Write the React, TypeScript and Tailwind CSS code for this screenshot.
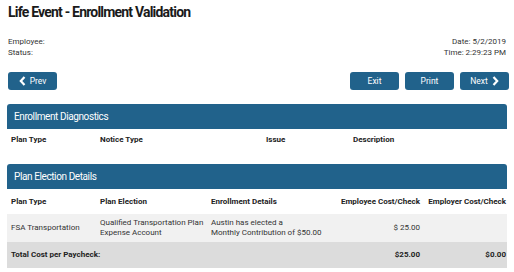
import React from "react";

function Chevron({ dir }: { dir: "left" | "right" }) {
  return (
    <svg width="7" height="10" viewBox="0 0 7 10" className="shrink-0">
      <path
        d={dir === "left" ? "M5.5 1 L1.8 5 L5.5 9" : "M1.5 1 L5.2 5 L1.5 9"}
        fill="none"
        stroke="white"
        strokeWidth="2.2"
      />
    </svg>
  );
}

function Btn({ children }: { children: React.ReactNode }) {
  return (
    <button className="flex h-[18px] w-[49px] items-center justify-center gap-[4px] rounded-[3px] bg-[#21628b] text-[8.5px] text-white">
      {children}
    </button>
  );
}

function SectionHeader({ title }: { title: string }) {
  return (
    <div className="flex h-[25px] items-center rounded-t-[3px] bg-[#21628b] px-[7px] text-[10px] tracking-[-0.4px] text-white">
      {title}
    </div>
  );
}

const cols = "grid grid-cols-[89px_111px_118px_91px_1fr] items-center pl-[4px] pr-[1px]";

export default function App() {
  return (
    <div
      className="h-[272px] w-[514px] overflow-hidden bg-white px-[7px] text-[#222]"
      style={{ fontFamily: "Roboto, 'Liberation Sans', sans-serif" }}
    >
      <h1 className="pl-[1px] pt-[2px] text-[14px] font-bold leading-[20px] tracking-[-0.8px] text-[#1a1a1a]">
        Life Event - Enrollment Validation
      </h1>

      {/* info */}
      <div className="mt-[14px] flex justify-between text-[8px] leading-[11px] text-[#333]">
        <div className="pl-[1px]">
          <div>Employee:</div>
          <div>Status:</div>
        </div>
        <div className="pr-[1px] text-right">
          <div>Date: 5/2/2019</div>
          <div>Time: 2:29:23 PM</div>
        </div>
      </div>

      {/* nav */}
      <div className="mt-[14px] flex items-center justify-between">
        <div className="pl-[1px]">
          <Btn>
            <Chevron dir="left" />
            <span>Prev</span>
          </Btn>
        </div>
        <div className="-mr-[2px] flex gap-[6px]">
          <Btn>Exit</Btn>
          <Btn>Print</Btn>
          <Btn>
            <span>Next</span>
            <Chevron dir="right" />
          </Btn>
        </div>
      </div>

      {/* diagnostics */}
      <div className="mt-[14px]">
        <SectionHeader title="Enrollment Diagnostics" />
        <div className="grid h-[22px] grid-cols-[89px_166px_87px_1fr] items-center px-[4px] text-[8px] font-bold">
          <div>Plan Type</div>
          <div>Notice Type</div>
          <div>Issue</div>
          <div>Description</div>
        </div>
      </div>

      {/* elections */}
      <div className="mt-[13px]">
        <SectionHeader title="Plan Election Details" />
        <div className="whitespace-nowrap text-[8px]">
          <div className={`${cols} h-[25px] font-bold`}>
            <div>Plan Type</div>
            <div>Plan Election</div>
            <div>Enrollment Details</div>
            <div className="text-right">Employee Cost/Check</div>
            <div className="text-right">Employer Cost/Check</div>
          </div>
          <div className={`${cols} h-[28px] bg-[#f1f1f1] leading-[10px] text-[#333]`}>
            <div>FSA Transportation</div>
            <div>
              Qualified Transportation Plan
              <br />
              Expense Account
            </div>
            <div>
              Austin has elected a
              <br />
              Monthly Contribution of $50.00
            </div>
            <div className="text-right">$ 25.00</div>
            <div />
          </div>
          <div className={`${cols} h-[26px] bg-[#dcdcdc] font-bold`}>
            <div className="col-span-3">Total Cost per Paycheck:</div>
            <div className="text-right">$25.00</div>
            <div className="text-right">$0.00</div>
          </div>
        </div>
      </div>
    </div>
  );
}
